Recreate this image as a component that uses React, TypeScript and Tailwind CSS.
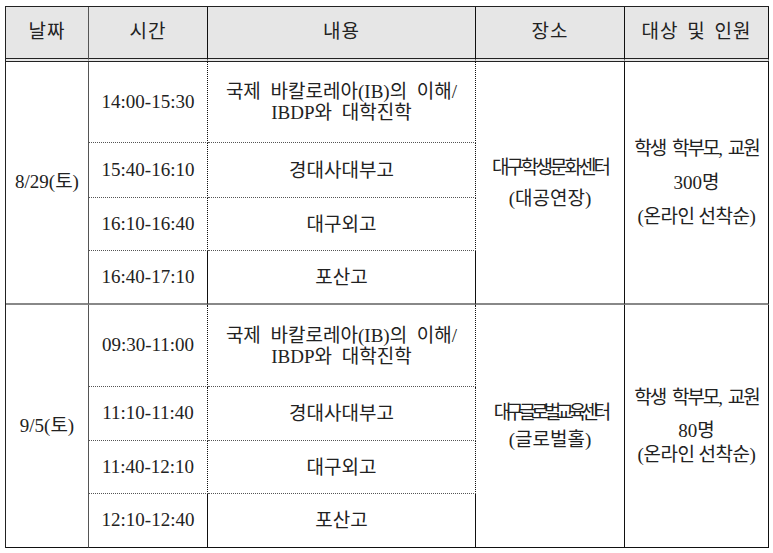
const COL_LINE = 'border-r border-[#111]';

type Slot = { time: string; content: string[] };

interface Session {
  date: string;
  slots: Slot[];
  heights: string[];
  place: { lines: string[]; className: string };
  target: React.ReactNode;
}

const SESSIONS: Session[] = [
  {
    date: '8/29(토)',
    slots: [
      { time: '14:00-15:30', content: ['국제 바칼로레아(IB)의 이해/', 'IBDP와 대학진학'] },
      { time: '15:40-16:10', content: ['경대사대부고'] },
      { time: '16:10-16:40', content: ['대구외고'] },
      { time: '16:40-17:10', content: ['포산고'] },
    ],
    heights: ['h-[81px]', 'h-[55px]', 'h-[53px]', 'h-[54px]'],
    place: { lines: ['대구학생문화센터', '(대공연장)'], className: 'leading-[31px]' },
    target: (
      <div className="leading-[34px]">
        <div className="tracking-[-2px] [word-spacing:4px]">학생 학부모, 교원</div>
        <div>300명</div>
        <div className="tracking-[-0.5px]">(온라인 선착순)</div>
      </div>
    ),
  },
  {
    date: '9/5(토)',
    slots: [
      { time: '09:30-11:00', content: ['국제 바칼로레아(IB)의 이해/', 'IBDP와 대학진학'] },
      { time: '11:10-11:40', content: ['경대사대부고'] },
      { time: '11:40-12:10', content: ['대구외고'] },
      { time: '12:10-12:40', content: ['포산고'] },
    ],
    heights: ['h-[82px]', 'h-[54px]', 'h-[53px]', 'h-[54px]'],
    place: { lines: ['대구글로벌교육센터', '(글로벌홀)'], className: 'leading-[27px]' },
    target: (
      <div className="leading-[24px]">
        <div className="tracking-[-2px] [word-spacing:4px]">학생 학부모, 교원</div>
        <div className="mt-[9px]">80명</div>
        <div className="tracking-[-0.5px]">(온라인 선착순)</div>
      </div>
    ),
  },
];

export default function App() {
  return (
    <div className="h-[553px] w-[773px] bg-white pl-[5px] pt-[6px] font-['Liberation_Serif','Noto_Sans_CJK_KR',serif] text-[19px] text-[#222]">
      <table className="table-fixed border-separate border-spacing-0 border-l border-t border-[#222]">
        <colgroup>
          <col className="w-[83px]" />
          <col className="w-[119px]" />
          <col className="w-[268px]" />
          <col className="w-[149px]" />
          <col className="w-[144px]" />
        </colgroup>
        <thead>
          <tr className="h-[55px] bg-[#e6e6e6]">
            {['날짜', '시간', '내용', '장소', '대상 및 인원'].map((h, i) => (
              <th
                key={h}
                className={`border-b-4 border-double border-b-[#222] p-0 text-center font-normal tracking-[1px] [word-spacing:3px] ${
                  i === 0 ? 'border-r border-r-[#555]' : 'border-r border-r-[#111]'
                }`}
              >
                {h}
              </th>
            ))}
          </tr>
        </thead>
        <tbody>
          {SESSIONS.map((s, si) => {
            const last = si === SESSIONS.length - 1;
            const sectionEdge = last ? 'border-b border-b-[#111]' : 'border-b-2 border-b-[#888]';
            return s.slots.map((slot, ri) => {
              const lastSlot = ri === s.slots.length - 1;
              const rowEdge = lastSlot ? sectionEdge : 'border-b border-dotted border-b-[#555]';
              return (
                <tr key={`${si}-${ri}`} className={s.heights[ri]}>
                  {ri === 0 && (
                    <td
                      rowSpan={s.slots.length}
                      className={`border-r border-r-[#555] p-0 text-center ${sectionEdge}`}
                    >
                      {s.date}
                    </td>
                  )}
                  <td className={`${COL_LINE} p-0 text-center ${rowEdge}`}>{slot.time}</td>
                  <td
                    className={`${COL_LINE} p-0 text-center leading-[21px] [word-spacing:5px] ${rowEdge}`}
                  >
                    {slot.content.map((line) => (
                      <div key={line}>{line}</div>
                    ))}
                  </td>
                  {ri === 0 && (
                    <>
                      <td
                        rowSpan={s.slots.length}
                        className={`${COL_LINE} p-0 text-center ${s.place.className} ${sectionEdge}`}
                      >
                        <div className={si === 0 ? 'tracking-[-3px]' : 'tracking-[-5px]'}>
                          {s.place.lines[0]}
                        </div>
                        <div>{s.place.lines[1]}</div>
                      </td>
                      <td
                        rowSpan={s.slots.length}
                        className={`${COL_LINE} p-0 text-center ${sectionEdge}`}
                      >
                        {s.target}
                      </td>
                    </>
                  )}
                </tr>
              );
            });
          })}
        </tbody>
      </table>
    </div>
  );
}
